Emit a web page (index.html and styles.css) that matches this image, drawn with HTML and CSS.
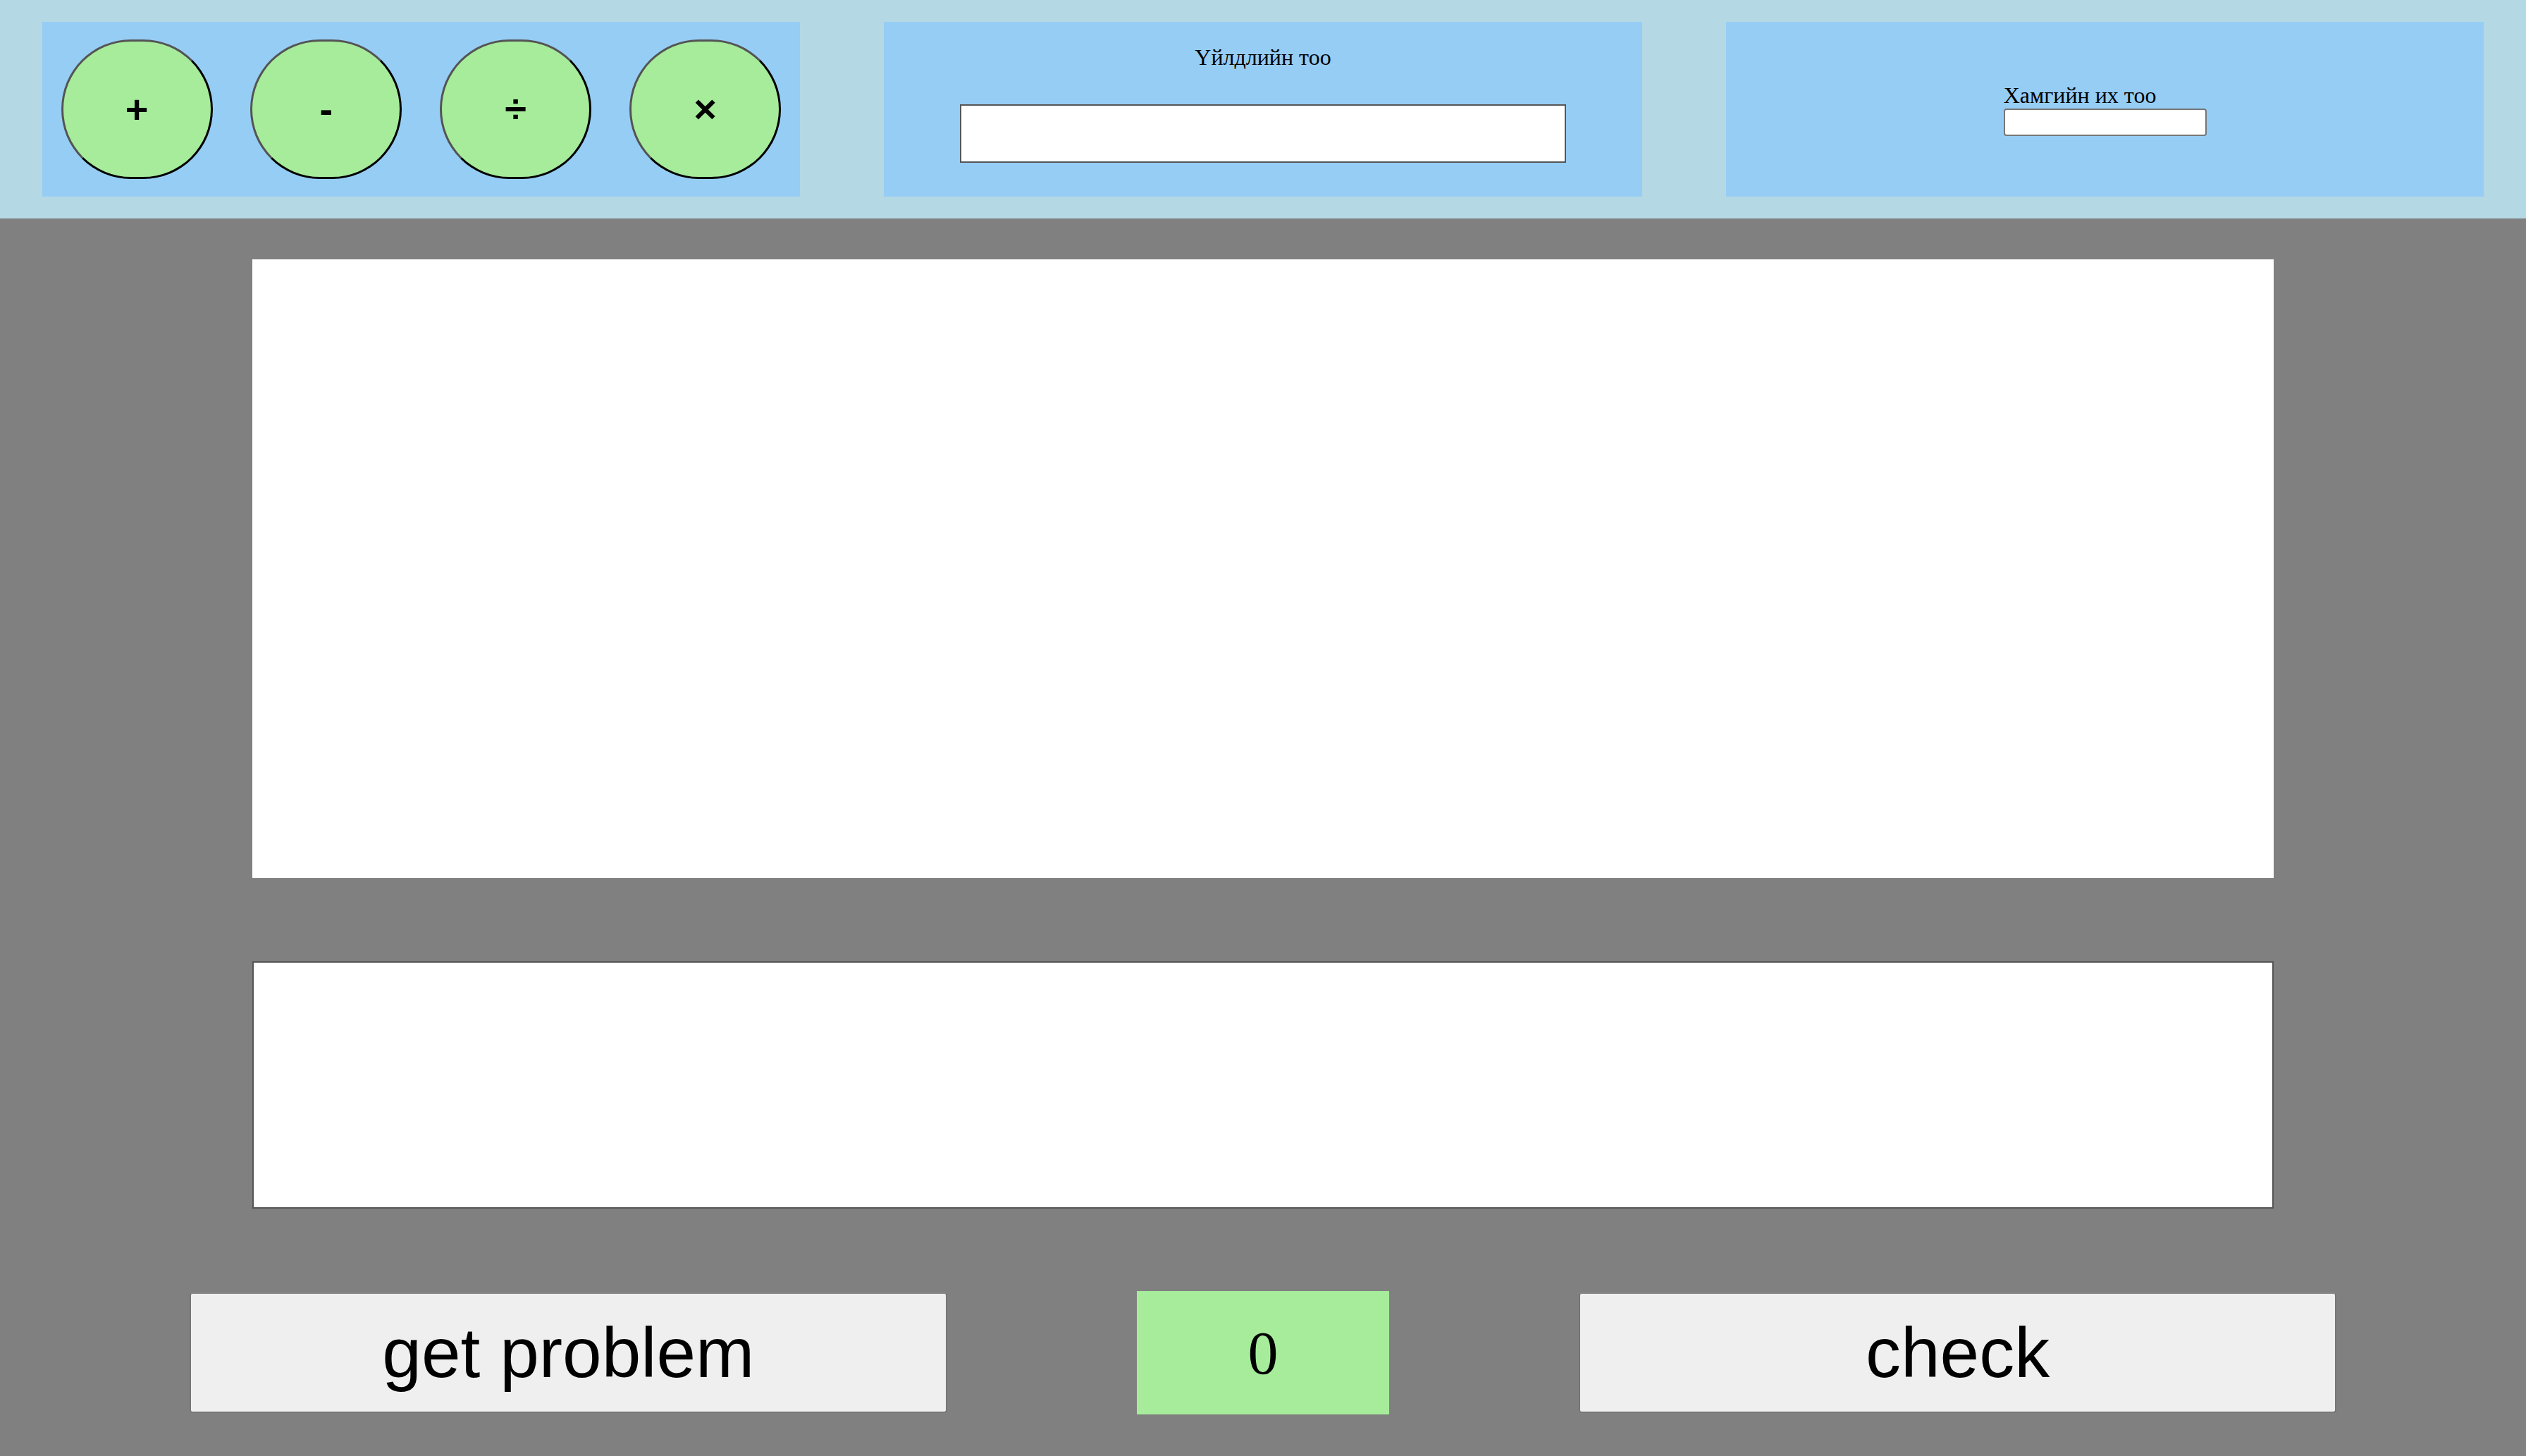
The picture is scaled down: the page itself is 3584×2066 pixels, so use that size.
FILE: index.html
```html
<!DOCTYPE html>
<html lang="mn">
<head>
<meta charset="utf-8">
<title>Math practice</title>
<link rel="stylesheet" href="styles.css">
</head>
<body>
<header class="top-bar">
  <div class="panel ops-panel">
    <button class="op-btn">+</button>
    <button class="op-btn">-</button>
    <button class="op-btn">÷</button>
    <button class="op-btn">×</button>
  </div>
  <div class="panel count-panel">
    <div class="panel-label">Үйлдлийн тоо</div>
    <input class="count-input" type="text">
  </div>
  <div class="panel max-panel">
    <div class="max-group">
      <div class="panel-label">Хамгийн их тоо</div>
      <input class="max-input" type="text">
    </div>
  </div>
</header>
<main class="work-area">
  <div class="problem-box"></div>
  <textarea class="answer-box"></textarea>
  <div class="action-row">
    <button class="action-btn">get problem</button>
    <div class="score-box">0</div>
    <button class="action-btn">check</button>
  </div>
</main>
</body>
</html>
```

FILE: styles.css
```css
html, body {
  margin: 0;
  padding: 0;
}

body {
  width: 100vw;
  height: 100vh;
  overflow: hidden;
  font-family: "Liberation Serif", "Times New Roman", serif;
  background: #808080;
}

.top-bar {
  height: 15vh;
  background: rgb(180, 216, 228);
  display: flex;
  justify-content: space-around;
  align-items: center;
}

.panel {
  width: 30%;
  height: 80%;
  background: rgb(150, 205, 245);
  box-sizing: border-box;
}

.ops-panel {
  display: flex;
  justify-content: space-around;
  align-items: center;
}

.op-btn {
  width: 20%;
  height: 80%;
  box-sizing: border-box;
  border-style: solid;
  border-width: 3px;
  border-color: #545454 #000 #000 #545454;
  border-radius: 46% / 50%;
  background: rgb(166, 236, 155);
  font-family: "Liberation Sans", Arial, sans-serif;
  font-size: 56px;
  font-weight: bold;
  color: #000;
  padding: 0;
}

.panel-label {
  font-size: 32px;
  line-height: normal;
  color: #000;
}

.count-panel {
  display: flex;
  flex-direction: column;
  align-items: center;
  padding-top: 32px;
}

.count-input {
  margin-top: 48px;
  width: 80%;
  height: 83px;
  box-sizing: border-box;
  border: 2px solid #555;
  background: #fff;
  padding: 0;
}

.max-panel {
  display: flex;
  justify-content: center;
  align-items: center;
}

.max-group {
  display: flex;
  flex-direction: column;
  align-items: flex-start;
}

.max-input {
  width: 288px;
  height: 39px;
  box-sizing: border-box;
  border: 2px solid #767676;
  border-radius: 4px;
  background: #fff;
  padding: 0;
}

.work-area {
  height: 85vh;
  display: flex;
  flex-direction: column;
  align-items: center;
  justify-content: space-around;
}

.problem-box {
  width: 80%;
  height: 50%;
  background: #fff;
}

.answer-box {
  width: 80%;
  height: 20%;
  box-sizing: border-box;
  border: 2px solid #555;
  background: #fff;
  resize: none;
  margin: 0;
  padding: 0;
}

.action-row {
  width: 100%;
  height: 10%;
  display: flex;
  justify-content: space-evenly;
  align-items: center;
}

.action-btn {
  width: 30%;
  height: calc(100% - 4px);
  box-sizing: border-box;
  background: #efefef;
  border: 2px solid #767676;
  border-top-color: #8a8a8a;
  border-radius: 4px;
  font-family: "Liberation Sans", Arial, sans-serif;
  font-size: 100px;
  color: #000;
  padding: 0;
}

.score-box {
  width: 10%;
  height: 100%;
  background: rgb(166, 236, 155);
  display: flex;
  justify-content: center;
  align-items: center;
  font-size: 86px;
  color: #000;
}
```
